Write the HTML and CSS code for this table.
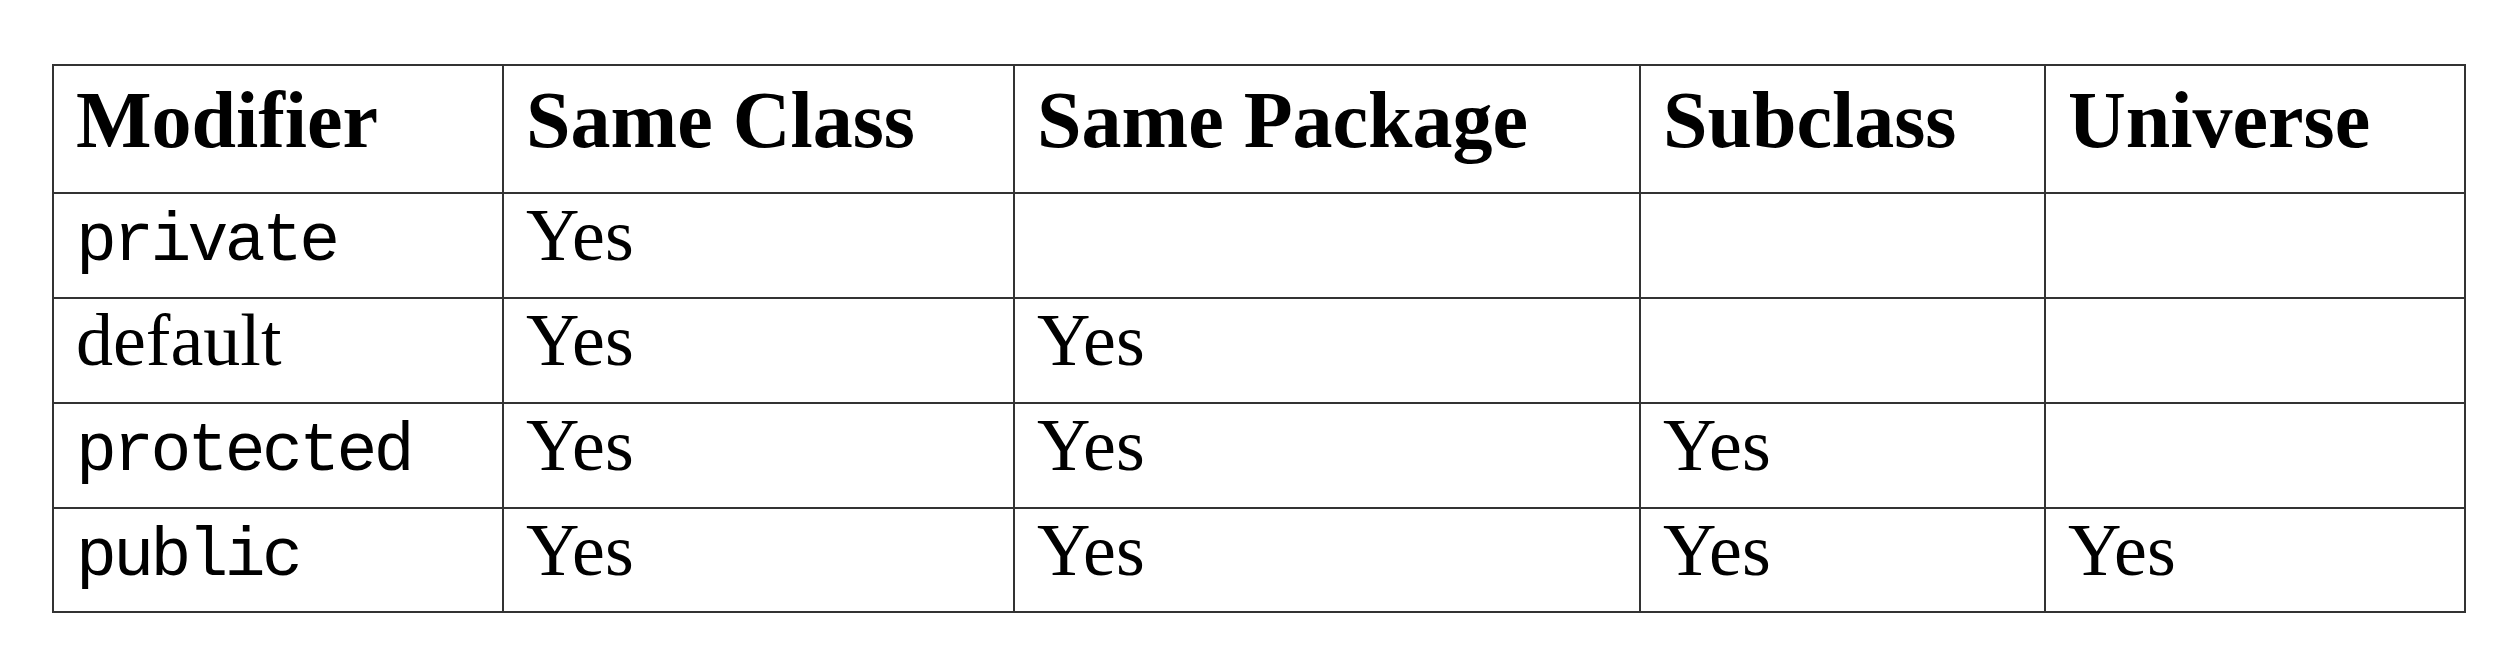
FILE: index.html
```html
<!DOCTYPE html>
<html lang="en">
<head>
<meta charset="utf-8">
<title>Access Modifiers</title>
<link rel="stylesheet" href="styles.css">
</head>
<body>
<div class="page">
  <div class="grid" role="table">
    <div class="cell head" role="columnheader">Modifier</div>
    <div class="cell head" role="columnheader">Same Class</div>
    <div class="cell head" role="columnheader">Same Package</div>
    <div class="cell head" role="columnheader">Subclass</div>
    <div class="cell head" role="columnheader">Universe</div>

    <div class="cell"><span class="mono">private</span></div>
    <div class="cell">Yes</div>
    <div class="cell"></div>
    <div class="cell"></div>
    <div class="cell"></div>

    <div class="cell">default</div>
    <div class="cell">Yes</div>
    <div class="cell">Yes</div>
    <div class="cell"></div>
    <div class="cell"></div>

    <div class="cell"><span class="mono">protected</span></div>
    <div class="cell">Yes</div>
    <div class="cell">Yes</div>
    <div class="cell">Yes</div>
    <div class="cell"></div>

    <div class="cell"><span class="mono">public</span></div>
    <div class="cell">Yes</div>
    <div class="cell">Yes</div>
    <div class="cell">Yes</div>
    <div class="cell">Yes</div>
  </div>
</div>
</body>
</html>
```
FILE: styles.css
```css
html, body {
  margin: 0;
  padding: 0;
  background: #ffffff;
}

.page {
  padding: 64px 0 0 52px;
}

.grid {
  display: grid;
  width: max-content;
  grid-template-columns: 448px 509px 624px 403px 418px;
  grid-template-rows: 126px 103px 103px 103px 102px;
  gap: 2px;
  padding: 2px;
  background: #333333;
}

.cell {
  background: #ffffff;
  color: #000000;
  font-family: "Liberation Serif", "Times New Roman", serif;
  font-size: 74px;
  line-height: 82px;
  padding: 0 0 0 22px;
  white-space: nowrap;
  font-kerning: normal;
}

.head {
  font-weight: bold;
  font-size: 80px;
  line-height: 90px;
  padding-top: 9px;
}

.mono {
  font-family: "Nimbus Mono PS", "Liberation Mono", "Courier New", monospace;
  font-size: 68px;
  letter-spacing: -3.6px;
  line-height: 1;
}
```
